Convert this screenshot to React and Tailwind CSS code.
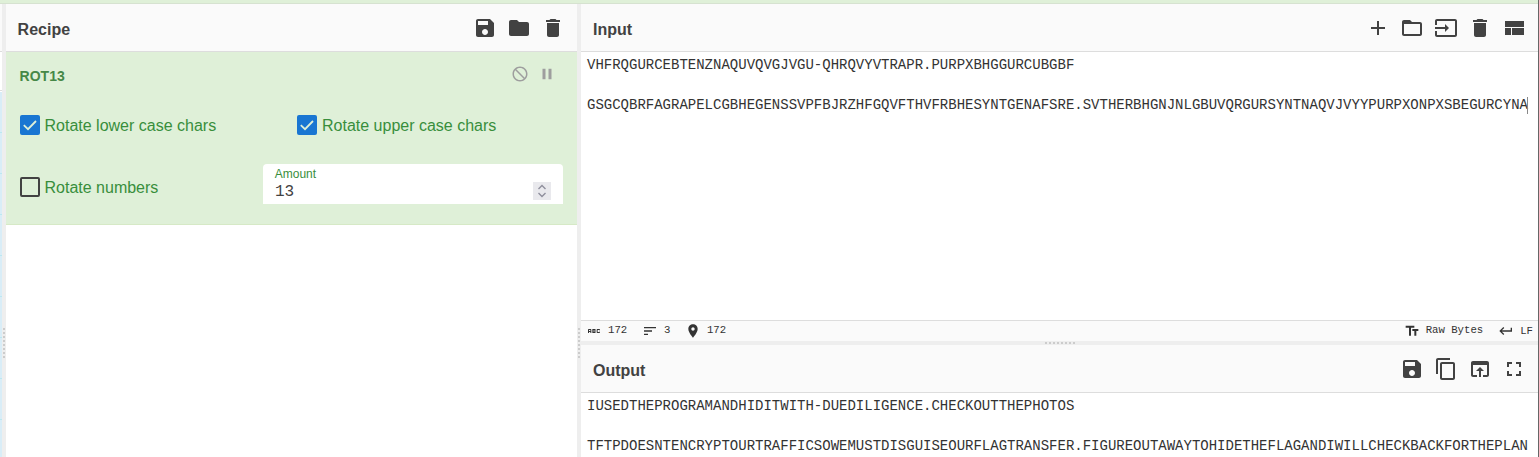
import React from "react";

const ICONS = {
  save: "M17 3H5c-1.11 0-2 .9-2 2v14c0 1.1.89 2 2 2h14c1.1 0 2-.9 2-2V7l-4-4zm-5 16c-1.66 0-3-1.34-3-3s1.34-3 3-3 3 1.34 3 3-1.34 3-3 3zm3-10H5V5h10v4z",
  folder: "M10 4H4c-1.1 0-1.99.9-1.99 2L2 18c0 1.1.9 2 2 2h16c1.1 0 2-.9 2-2V8c0-1.1-.9-2-2-2h-8l-2-2z",
  folderOpen: "M20 6h-8l-2-2H4c-1.1 0-1.99.9-1.99 2L2 18c0 1.1.9 2 2 2h16c1.1 0 2-.9 2-2V8c0-1.1-.9-2-2-2zm0 12H4V8h16v10z",
  trash: "M6 19c0 1.1.9 2 2 2h8c1.1 0 2-.9 2-2V7H6v12zM19 4h-3.5l-1-1h-5l-1 1H5v2h14V4z",
  add: "M19 13h-6v6h-2v-6H5v-2h6V5h2v6h6v2z",
  input: "M21 3.01H3c-1.1 0-2 .9-2 2V9h2V4.99h18v14.03H3V15H1v4.01c0 1.1.9 1.98 2 1.98h18c1.1 0 2-.88 2-1.98v-14c0-1.11-.9-2-2-2zM11 16l4-4-4-4v3H1v2h10v3z",
  layout: "M3 19h6v-7H3v7zm7 0h12v-7H10v7zM3 5v6h19V5H3z",
  copy: "M16 1H4c-1.1 0-2 .9-2 2v14h2V3h12V1zm3 4H8c-1.1 0-2 .9-2 2v14c0 1.1.9 2 2 2h11c1.1 0 2-.9 2-2V7c0-1.1-.9-2-2-2zm0 16H8V7h11v14z",
  openIn: "M19 4H5c-1.11 0-2 .9-2 2v12c0 1.1.89 2 2 2h4v-2H5V8h14v10h-4v2h4c1.1 0 2-.9 2-2V6c0-1.1-.89-2-2-2zm-7 6l-4 4h3v6h2v-6h3l-4-4z",
  fullscreen: "M7 14H5v5h5v-2H7v-3zm-2-4h2V7h3V5H5v5zm12 7h-3v2h5v-5h-2v3zM14 5v2h3v3h2V5h-5z",
  disable: "M12 2C6.48 2 2 6.48 2 12s4.48 10 10 10 10-4.48 10-10S17.52 2 12 2zm0 18c-4.42 0-8-3.58-8-8 0-1.85.63-3.55 1.69-4.9L16.9 18.31C15.55 19.37 13.85 20 12 20zm6.31-3.1L7.1 5.69C8.45 4.63 10.15 4 12 4c4.42 0 8 3.58 8 8 0 1.85-.63 3.55-1.69 4.9z",
  pause: "M6 19h4V5H6v14zm8-14v14h4V5h-4z",
  abc: "M21 11h-1.5v-.5h-2v3h2V13H21v1c0 .55-.45 1-1 1h-3c-.55 0-1-.45-1-1v-4c0-.55.45-1 1-1h3c.55 0 1 .45 1 1v1zM8 10v5H6.5v-1.5h-2V15H3v-5c0-.55.45-1 1-1h3c.55 0 1 .45 1 1zm-1.5.5h-2V12h2v-1.5zm7 1.5c.55 0 1 .45 1 1v1c0 .55-.45 1-1 1h-4V9h4c.55 0 1 .45 1 1v1c0 .55-.45 1-1 1zM11 10.5v.75h2v-.75h-2zm2 2.25h-2v.75h2v-.75z",
  sort: "M3 18h6v-2H3v2zM3 6v2h18V6H3zm0 7h12v-2H3v2z",
  place: "M12 2C8.13 2 5 5.13 5 9c0 5.25 7 13 7 13s7-7.75 7-13c0-3.87-3.13-7-7-7zm0 9.5c-1.38 0-2.5-1.12-2.5-2.5s1.12-2.5 2.5-2.5 2.5 1.12 2.5 2.5-1.12 2.5-2.5 2.5z",
  textFields: "M2.5 4v3h5v12h3V7h5V4h-13zm19 5h-9v3h3v7h3v-7h3V9z",
  enter: "M19 7v4H5.83l3.58-3.59L8 6l-6 6 6 6 1.41-1.41L5.83 13H21V7z",
};

function Icon({ name, className = "size-6" }) {
  return (
    <svg viewBox="0 0 24 24" fill="currentColor" className={`shrink-0 ${className}`}>
      <path d={ICONS[name]} />
    </svg>
  );
}

function PaneHeader({ title, icons, className = "pr-3 pl-3" }) {
  return (
    <header
      className={`flex h-12 shrink-0 items-center justify-between border-b border-[#ddd] bg-[#fafafa] text-[#424242] ${className}`}
    >
      <h2 className="pt-1 text-base leading-6 font-bold">{title}</h2>
      <div className="flex gap-2.5">
        {icons.map((name) => (
          <Icon key={name} name={name} />
        ))}
      </div>
    </header>
  );
}

const DOTS = [0, 1, 2, 3, 4, 5, 6, 7];

function VerticalGutter() {
  return (
    <div className="flex w-1 shrink-0 flex-col items-center gap-0.5 bg-[#eee] pt-[324px]">
      {DOTS.map((d) => (
        <span key={d} className="size-0.5 shrink-0 bg-[#ccc]" />
      ))}
    </div>
  );
}

function Checkbox({ label, checked = false, className = "gap-[5px]" }) {
  return (
    <label className={`flex h-5 items-center ${className}`}>
      {checked ? (
        <span className="flex size-5 items-center justify-center rounded-xs bg-[#1976d2]">
          <svg viewBox="0 0 20 20" className="size-5" fill="none" stroke="#dff0d8" strokeWidth="1.8">
            <path d="M3.8 10.2 L8 14.2 L16 6" />
          </svg>
        </span>
      ) : (
        <span className="size-5 rounded-xs border-2 border-[#424242]" />
      )}
      <span className="pt-px text-base leading-5 text-[#388e3c]">{label}</span>
    </label>
  );
}

function Operation() {
  return (
    <section className="h-[173px] shrink-0 border-b border-[#d6e9c6] bg-[#dff0d8] pr-3.5 pl-3.5">
      <div className="flex h-[63px] justify-between pt-[13px]">
        <h3 className="-ml-[0.4px] pt-px text-sm leading-5 font-bold text-[#468847]">ROT13</h3>
        <div className="flex gap-[9px] pr-[7px] text-[#9e9e9e]">
          <Icon name="disable" className="size-[18px]" />
          <Icon name="pause" className="size-[18px]" />
        </div>
      </div>
      <div className="grid grid-cols-[277px_1fr]">
        <Checkbox label="Rotate lower case chars" checked className="gap-[4.5px]" />
        <Checkbox label="Rotate upper case chars" checked />
      </div>
      <div className="mt-[29px] flex justify-between">
        <div className="pt-[13px]">
          <Checkbox label="Rotate numbers" className="gap-[4.5px]" />
        </div>
        <div className="flex h-10 w-[300px] items-end justify-between rounded-t bg-white pr-3 pb-1 pl-3">
          <div className="flex h-9 flex-col">
            <span className="-ml-[0.3px] pt-[3px] text-xs leading-[14px] text-[#388e3c]">Amount</span>
            <span className="pt-px font-['Liberation_Mono',monospace] text-base leading-[20px] text-[#424242]">13</span>
          </div>
          <svg viewBox="0 0 18 18" className="size-[18px] bg-[#e9e9ed]" fill="none" stroke="#8f8f9d" strokeWidth="1.4">
            <path d="M5.5 7 L9 3.5 L12.5 7 M5.5 11 L9 14.5 L12.5 11" />
          </svg>
        </div>
      </div>
    </section>
  );
}

function EditorLine({ children }) {
  return <p className="h-5 whitespace-pre">{children}</p>;
}

function Status({ icon, text, textClass = "-mt-[3px]" }) {
  return (
    <span className="flex items-center gap-1.5">
      <Icon name={icon} className="size-4" />
      <span className={`leading-4 ${textClass}`}>{text}</span>
    </span>
  );
}

export default function App() {
  return (
    <div className="flex h-[457px] w-[1539px] overflow-hidden bg-white font-['Liberation_Sans',Arial,sans-serif]">
      <div className="flex min-w-0 flex-1 flex-col">
        <div className="h-1 shrink-0 border-b border-[#d6e2d0] bg-[#dff0d8]" />
        <main className="flex min-h-0 flex-1">
          <aside className="flex w-0.5 shrink-0 flex-col overflow-hidden">
            <div className="h-12 shrink-0 border-b border-[#ddd] bg-[#fafafa]" />
            <div className="mb-px h-[39px] shrink-0 border-b border-[#ddd]" />
            {[0, 1, 2, 3, 4, 5, 6, 7, 8].map((n) => (
              <div key={n} className="h-[41px] shrink-0 border-b border-[#bce8f1] bg-[#d9edf7]" />
            ))}
          </aside>
          <VerticalGutter />
          <section className="flex w-[571px] shrink-0 flex-col">
            <PaneHeader title="Recipe" icons={["save", "folder", "trash"]} className="pr-3 pl-[11.6px]" />
            <Operation />
          </section>
          <VerticalGutter />
          <div className="flex min-w-0 flex-1 flex-col">
            <PaneHeader title="Input" icons={["add", "folderOpen", "input", "trash", "layout"]} />
            <div className="h-[268px] shrink-0 pt-[3px] pl-1.5 font-['Liberation_Mono',monospace] text-sm leading-5 text-[#333]">
              <EditorLine>VHFRQGURCEBTENZNAQUVQVGJVGU-QHRQVYVTRAPR.PURPXBHGGURCUBGBF</EditorLine>
              <EditorLine />
              <div className="flex">
                <EditorLine>GSGCQBRFAGRAPELCGBHEGENSSVPFBJRZHFGQVFTHVFRBHESYNTGENAFSRE.SVTHERBHGNJNLGBUVQRGURSYNTNAQVJVYYPURPXONPXSBEGURCYNA</EditorLine>
                <span className="mt-0.5 -ml-px h-[17px] w-px bg-[#888]" />
              </div>
            </div>
            <div className="flex h-[21px] shrink-0 items-start justify-between border-t border-[#ddd] bg-[#fafafa] pt-0.5 pr-[5px] pl-[5px] font-['Liberation_Mono',monospace] text-[10.67px] text-[#333]">
              <div className="flex gap-[14.7px]">
                <Status icon="abc" text="172" />
                <Status icon="sort" text="3" />
                <Status icon="place" text="172" />
              </div>
              <div className="flex gap-[15px]">
                <Status icon="textFields" text="Raw Bytes" />
                <Status icon="enter" text="LF" textClass="-mt-px" />
              </div>
            </div>
            <div className="flex h-1 shrink-0 items-center justify-center gap-0.5 bg-[#eee]">
              {DOTS.map((d) => (
                <span key={d} className="size-0.5 bg-[#ccc]" />
              ))}
            </div>
            <PaneHeader title="Output" icons={["save", "copy", "openIn", "fullscreen"]} />
            <div className="min-h-0 flex-1 overflow-hidden pt-[3px] pl-1.5 font-['Liberation_Mono',monospace] text-sm leading-5 text-[#333]">
              <EditorLine>IUSEDTHEPROGRAMANDHIDITWITH-DUEDILIGENCE.CHECKOUTTHEPHOTOS</EditorLine>
              <EditorLine />
              <EditorLine>TFTPDOESNTENCRYPTOURTRAFFICSOWEMUSTDISGUISEOURFLAGTRANSFER.FIGUREOUTAWAYTOHIDETHEFLAGANDIWILLCHECKBACKFORTHEPLAN</EditorLine>
            </div>
          </div>
        </main>
      </div>
      <div className="w-px shrink-0 bg-[#666]" />
    </div>
  );
}
